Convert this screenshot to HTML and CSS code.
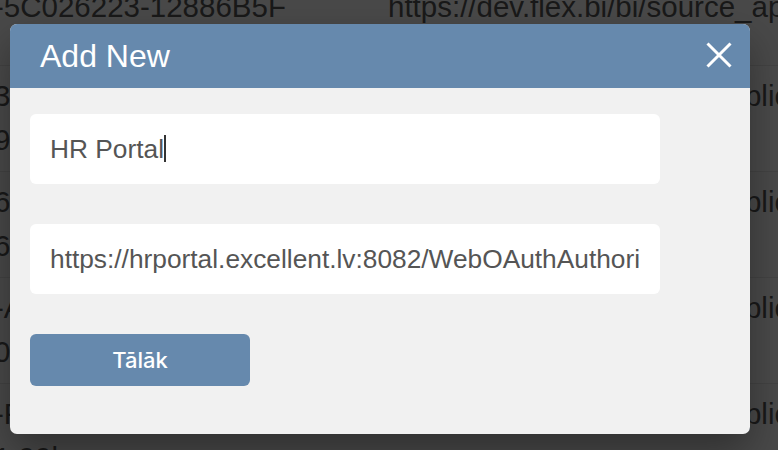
FILE: index.html
```html
<!DOCTYPE html>
<html lang="en">
<head>
<meta charset="utf-8">
<title>Add New</title>
<link rel="stylesheet" href="styles.css">
</head>
<body>
<div class="page">
  <div class="table">
    <div class="row row-first">
      <div class="cell cell-id"><div>3F1A0-7C1D-44B2-A8E1</div><div>-5C026223-12886B5F</div></div>
      <div class="cell"><div>https://dev.flex.bi/bi/app_application</div><div>https://dev.flex.bi/bi/source_application</div></div>
    </div>
    <div class="row">
      <div class="cell cell-id"><div>3D8F2A11-0B6E-4C7F</div><div>9A52-1E77C3D0B4A2</div></div>
      <div class="cell"><div>https://dev.flex.bi/bi/app_application</div></div>
    </div>
    <div class="row">
      <div class="cell cell-id"><div>6C1B7E40-93AF-4D21</div><div>6B04-8F2E9A71C5D3</div></div>
      <div class="cell"><div>https://dev.flex.bi/bi/app_application</div></div>
    </div>
    <div class="row">
      <div class="cell cell-id"><div>-A4E9-47C2-B61D-0F</div><div>01D7C5-2B93E8F640</div></div>
      <div class="cell"><div>https://dev.flex.bi/bi/app_application</div></div>
    </div>
    <div class="row">
      <div class="cell cell-id"><div>-F52C-4B08-9E3A-71</div><div>1 99l</div></div>
      <div class="cell"><div>https://dev.flex.bi/bi/app_application</div></div>
    </div>
  </div>

  <div class="backdrop"></div>

  <div class="modal">
    <div class="modal-header">
      <h1 class="modal-title">Add New</h1>
      <button class="close-btn" aria-label="Close">
        <svg width="26" height="26" viewBox="0 0 26 26"><path d="M1.5 1.5 L24.5 24.5 M24.5 1.5 L1.5 24.5" stroke="#fff" stroke-width="3" fill="none"/></svg>
      </button>
    </div>
    <div class="modal-body">
      <div class="field"><span class="field-text">HR Portal</span><span class="caret"></span></div>
      <div class="field"><span class="field-text">https://hrportal.excellent.lv:8082/WebOAuthAuthorize</span></div>
      <button class="primary-btn">Tālāk</button>
    </div>
  </div>
</div>
</body>
</html>
```
FILE: styles.css
```css
html, body {
  margin: 0;
  padding: 0;
}
body {
  width: 778px;
  height: 450px;
  overflow: hidden;
  font-family: "Liberation Sans", Arial, sans-serif;
}
.page {
  position: relative;
  width: 778px;
  height: 450px;
  overflow: hidden;
  background: #ffffff;
}
.table {
  margin-top: -67px;
  margin-left: -6px;
  font-size: 29.5px;
  line-height: 44px;
  color: #585858;
  white-space: nowrap;
}
.row {
  display: grid;
  grid-template-columns: 394px 1fr;
  padding: 8px 0 9px;
  border-top: 1px solid #e6e6e6;
}
.row-first {
  padding-bottom: 36px;
  border-top: none;
}
.row:nth-child(odd) {
  background: #fbfbfb;
}
.cell {
  overflow: hidden;
}
.backdrop {
  position: absolute;
  inset: 0;
  background: rgba(0, 0, 0, 0.71);
}
.modal {
  position: absolute;
  left: 10px;
  top: 24px;
  width: 740px;
  height: 410px;
  background: #f1f1f1;
  border-radius: 7px;
  overflow: hidden;
  display: flex;
  flex-direction: column;
  box-shadow: 0 18px 40px rgba(0, 0, 0, 0.35);
}
.modal-header {
  height: 64px;
  background: #6689ad;
  display: flex;
  align-items: center;
  justify-content: space-between;
  padding: 0 18px 0 30px;
}
.modal-title {
  margin: 0;
  font-family: "Liberation Sans", Arial, sans-serif;
  font-weight: 400;
  font-size: 32px;
  color: #ffffff;
}
.close-btn {
  border: none;
  background: none;
  padding: 0;
  width: 26px;
  height: 26px;
  display: flex;
  margin-top: -2px;
}
.modal-body {
  padding: 26px 20px 0;
  display: flex;
  flex-direction: column;
  align-items: flex-start;
  gap: 40px;
}
.field {
  box-sizing: border-box;
  width: 630px;
  height: 70px;
  background: #ffffff;
  border-radius: 6px;
  padding: 0 20px;
  display: flex;
  align-items: center;
  white-space: nowrap;
  font-size: 26.3px;
  color: #555555;
}
.field-text {
  flex: 0 1 auto;
  min-width: 0;
  overflow: hidden;
}
.caret {
  flex: none;
  width: 2px;
  height: 27px;
  background: #333333;
  margin-top: -1px;
}
.primary-btn {
  width: 220px;
  height: 52px;
  border: none;
  border-radius: 6px;
  background: #6689ad;
  color: #ffffff;
  font-family: Inter, "Noto Sans", sans-serif;
  font-weight: 500;
  font-size: 22px;
  padding: 0;
}
```
